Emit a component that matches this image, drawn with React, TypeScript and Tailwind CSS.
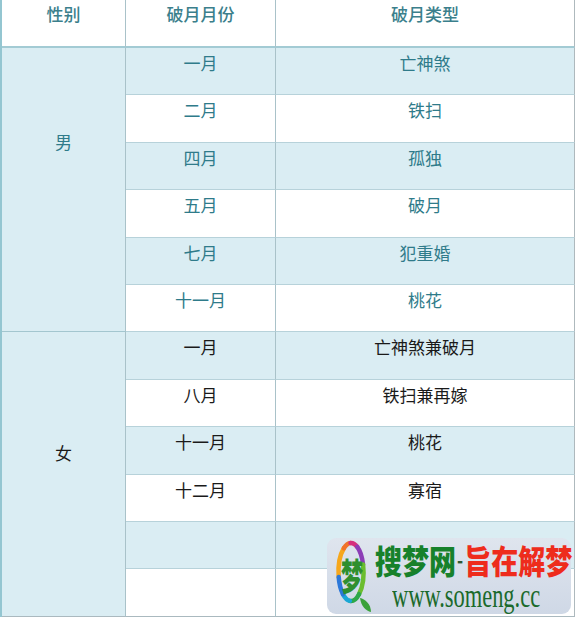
import React from "react";

const cjk = { fontFamily: '"Noto Sans CJK SC", "Noto Sans", sans-serif' };

type Row = { m: string; t: string; blue: boolean };

const male: Row[] = [
  { m: "一月", t: "亡神煞", blue: true },
  { m: "二月", t: "铁扫", blue: false },
  { m: "四月", t: "孤独", blue: true },
  { m: "五月", t: "破月", blue: false },
  { m: "七月", t: "犯重婚", blue: true },
  { m: "十一月", t: "桃花", blue: false },
];

const female: Row[] = [
  { m: "一月", t: "亡神煞兼破月", blue: true },
  { m: "八月", t: "铁扫兼再嫁", blue: false },
  { m: "十一月", t: "桃花", blue: true },
  { m: "十二月", t: "寡宿", blue: false },
  { m: "", t: "", blue: true },
  { m: "", t: "", blue: false },
];

function Cells({ rows, color, last }: { rows: Row[]; color: string; last: boolean }) {
  return (
    <>
      {rows.map((r, i) => {
        const bg = r.blue ? "bg-[#daedf3]" : "bg-white";
        const bb = last && i === rows.length - 1 ? "border-b-[#aab9bf]" : "border-b-[#b7d2da]";
        return (
          <React.Fragment key={i}>
            <div className={`${bg} ${bb} border-b border-r border-r-[#a9c2c9] flex justify-center pt-[3px] ${color}`}>
              {r.m}
            </div>
            <div className={`${bg} ${bb} border-b border-r border-r-[#aeb9bd] flex justify-center pt-[3px] ${color}`}>
              {r.t}
            </div>
          </React.Fragment>
        );
      })}
    </>
  );
}

function Logo() {
  const cx = 24;
  const cy = 34;
  const rx = 12.5;
  const ry = 29;
  const arc = (a: number, b: number) => {
    const p = (t: number) => {
      const r = (t * Math.PI) / 180;
      return `${(cx + rx * Math.cos(r)).toFixed(2)} ${(cy + ry * Math.sin(r)).toFixed(2)}`;
    };
    return `M ${p(a)} A ${rx} ${ry} 0 0 1 ${p(b)}`;
  };
  const segs: [number, number, string][] = [
    [170, 235, "#f6a71c"],
    [235, 268, "#f0732a"],
    [268, 300, "#d62f7d"],
    [300, 345, "#8c3db6"],
    [345, 50, "#6bbd2f"],
    [50, 95, "#2ca84a"],
    [95, 130, "#1aa7d6"],
    [130, 170, "#2c78d9"],
  ];
  return (
    <svg width="50" height="76" viewBox="0 0 50 76" className="absolute left-0 top-0">
      {segs.map(([a, b, c], i) => (
        <path
          key={i}
          d={arc(a, b >= a ? b : b + 360)}
          fill="none"
          stroke={c}
          strokeWidth="4.5"
          strokeLinecap="round"
        />
      ))}
      <path d="M33 60 C 38 61, 44 66, 44 74 C 39 73, 34 68, 33 60 Z" fill="#3aa23a" />
    </svg>
  );
}

export default function App() {
  return (
    <div className="w-[578px] h-[622px] bg-white relative overflow-hidden" style={cjk}>
      <div className="grid w-[575px] grid-cols-[124px_150px_299px] grid-rows-[48px_repeat(12,47.42px)] text-[17px] leading-[24px] border-l-2 border-l-[#94c6d1]">
        <div className="bg-white border-b-2 border-b-[#a3cbd4] border-r border-r-[#a9c2c9] flex justify-center pt-[2px] text-[#3b7f8c] font-medium">
          性别
        </div>
        <div className="bg-white border-b-2 border-b-[#a3cbd4] border-r border-r-[#a9c2c9] flex justify-center pt-[2px] text-[#3b7f8c] font-medium">
          破月月份
        </div>
        <div className="bg-white border-b-2 border-b-[#a3cbd4] border-r border-r-[#aeb9bd] flex justify-center pt-[2px] text-[#3b7f8c] font-medium">
          破月类型
        </div>

        <div className="row-span-6 col-start-1 row-start-2 bg-[#daedf3] border-b border-b-[#a3c6cf] border-r border-r-[#a9c2c9] flex justify-center pt-[82px] text-[#2f7b8a]">
          男
        </div>
        <div className="col-start-2 col-span-2 row-start-2 row-span-6 grid grid-cols-[150px_299px] grid-rows-[repeat(6,47.42px)]">
          <Cells rows={male} color="text-[#2f7b8a]" last={false} />
        </div>

        <div className="row-span-6 col-start-1 row-start-8 bg-[#daedf3] border-b border-b-[#aab9bf] border-r border-r-[#a9c2c9] flex justify-center pt-[109px] text-[#1a1a1a]">
          女
        </div>
        <div className="col-start-2 col-span-2 row-start-8 row-span-6 grid grid-cols-[150px_299px] grid-rows-[repeat(6,47.42px)]">
          <Cells rows={female} color="text-[#1a1a1a]" last={true} />
        </div>
      </div>

      <div className="absolute left-[327px] top-[538px] w-[244px] h-[76px] rounded-[9px] bg-gradient-to-b from-[#dfe5ee] to-[#cfd8e6]">
        <Logo />
        <span
          className="absolute left-[14px] top-[17px] text-[22px] leading-[22px] font-black text-[#2f8f2f] scale-y-[1.7] origin-top"
          style={cjk}
        >
          梦
        </span>
        <div className="absolute left-[48px] top-[5px] flex items-center h-[29px] whitespace-nowrap scale-y-[1.2] origin-top">
          <span className="text-[27px] leading-[29px] font-black text-[#17812b]">搜梦网</span>
          <span className="text-[16px] leading-[29px] font-black text-[#2d5a33] mx-[1px]">-</span>
          <span className="text-[27px] leading-[29px] font-black text-[#ee2c1c]">旨在解梦</span>
        </div>
        <div
          className="absolute left-[65px] top-[44px] text-[34px] leading-[28px] text-[#1b6a2c] scale-x-[0.66] origin-left whitespace-nowrap"
          style={{ fontFamily: '"Liberation Serif", serif' }}
        >
          www.someng.cc
        </div>
      </div>
    </div>
  );
}
